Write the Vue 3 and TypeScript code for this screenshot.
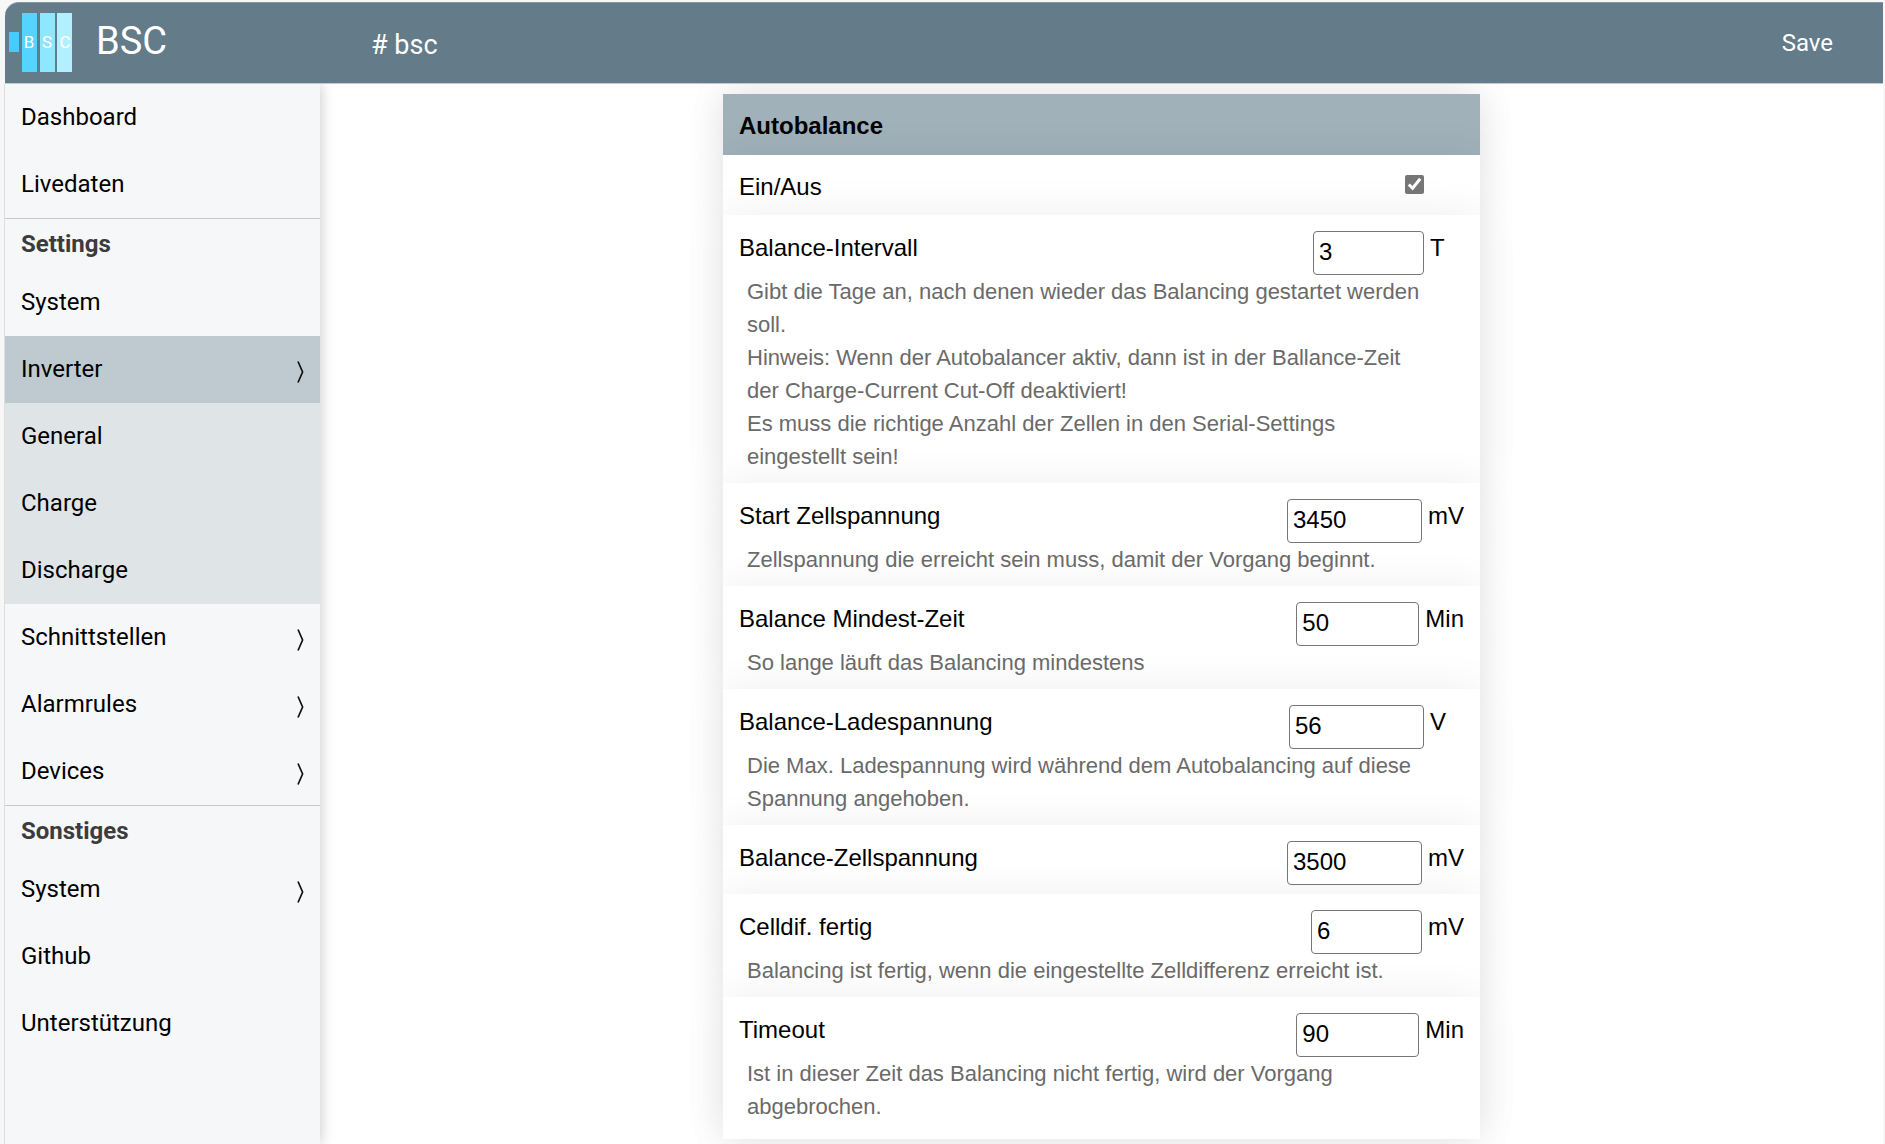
<script setup lang="ts">
import { reactive, ref } from 'vue'

interface NavItem {
  label: string
  expandable?: boolean
  active?: boolean
  children?: string[]
}

interface NavGroup {
  title?: string
  items: NavItem[]
}

interface Field {
  id: string
  label: string
  value: number
  unit: string
  size: 'small' | 'medium' | 'large'
  help?: string
}

const groups: NavGroup[] = [
  { items: [{ label: 'Dashboard' }, { label: 'Livedaten' }] },
  {
    title: 'Settings',
    items: [
      { label: 'System' },
      {
        label: 'Inverter',
        expandable: true,
        active: true,
        children: ['General', 'Charge', 'Discharge'],
      },
      { label: 'Schnittstellen', expandable: true },
      { label: 'Alarmrules', expandable: true },
      { label: 'Devices', expandable: true },
    ],
  },
  {
    title: 'Sonstiges',
    items: [
      { label: 'System', expandable: true },
      { label: 'Github' },
      { label: 'Unterstützung' },
    ],
  },
]

const enabled = ref(true)

const fields = reactive<Field[]>([
  {
    id: 'interval',
    label: 'Balance-Intervall',
    value: 3,
    unit: 'T',
    size: 'small',
    help:
      'Gibt die Tage an, nach denen wieder das Balancing gestartet werden soll.\n' +
      'Hinweis: Wenn der Autobalancer aktiv, dann ist in der Ballance-Zeit der Charge-Current Cut-Off deaktiviert!\n' +
      'Es muss die richtige Anzahl der Zellen in den Serial-Settings eingestellt sein!',
  },
  {
    id: 'start-voltage',
    label: 'Start Zellspannung',
    value: 3450,
    unit: 'mV',
    size: 'large',
    help: 'Zellspannung die erreicht sein muss, damit der Vorgang beginnt.',
  },
  {
    id: 'min-time',
    label: 'Balance Mindest-Zeit',
    value: 50,
    unit: 'Min',
    size: 'medium',
    help: 'So lange läuft das Balancing mindestens',
  },
  {
    id: 'charge-voltage',
    label: 'Balance-Ladespannung',
    value: 56,
    unit: 'V',
    size: 'large',
    help: 'Die Max. Ladespannung wird während dem Autobalancing auf diese Spannung angehoben.',
  },
  {
    id: 'cell-voltage',
    label: 'Balance-Zellspannung',
    value: 3500,
    unit: 'mV',
    size: 'large',
  },
  {
    id: 'cell-diff',
    label: 'Celldif. fertig',
    value: 6,
    unit: 'mV',
    size: 'small',
    help: 'Balancing ist fertig, wenn die eingestellte Zelldifferenz erreicht ist.',
  },
  {
    id: 'timeout',
    label: 'Timeout',
    value: 90,
    unit: 'Min',
    size: 'medium',
    help: 'Ist in dieser Zeit das Balancing nicht fertig, wird der Vorgang abgebrochen.',
  },
])
</script>

<template>
  <div class="window">
    <header class="topbar">
      <div class="brand">
        <svg class="logo" viewBox="0 0 64 60" aria-hidden="true">
          <rect x="0" y="19" width="10" height="20" fill="#48caff" />
          <rect x="13" y="0" width="15" height="59" fill="#55d4ff" />
          <rect x="31" y="0" width="15" height="59" fill="#8fe6ff" />
          <rect x="48" y="0" width="15" height="59" fill="#b3f0ff" />
          <g class="logo-text" fill="#fff" text-anchor="middle">
            <text x="20" y="35">B</text>
            <text x="38" y="35">S</text>
            <text x="56" y="35">C</text>
          </g>
        </svg>
        <span class="brand-name">BSC</span>
      </div>
      <h1 class="host"># bsc</h1>
      <button class="save" type="submit" form="settings">Save</button>
    </header>

    <div class="body">
      <nav class="sidebar">
        <section v-for="(group, gi) in groups" :key="gi" class="group">
          <h2 v-if="group.title" class="group-title">{{ group.title }}</h2>
          <template v-for="item in group.items" :key="item.label">
            <a href="#" class="nav-item" :class="{ active: item.active }">
              <span>{{ item.label }}</span>
              <svg v-if="item.expandable" class="chevron" viewBox="0 0 7 22" aria-hidden="true">
                <path d="M1 0.5 L5.6 11 L1 21.5" fill="none" stroke="#111" stroke-width="1.7" />
              </svg>
            </a>
            <a v-for="child in item.children" :key="child" href="#" class="nav-item child">{{ child }}</a>
          </template>
        </section>
      </nav>

      <main class="content">
        <form id="settings" class="card" @submit.prevent>
          <h2 class="card-title">Autobalance</h2>
          <div class="row toggle-row">
            <div class="line">
              <label for="enabled">Ein/Aus</label>
              <input id="enabled" v-model="enabled" type="checkbox" />
              <span class="unit"></span>
            </div>
          </div>
          <div v-for="field in fields" :key="field.id" class="row" :class="{ plain: !field.help }">
            <div class="line">
              <label :for="field.id">{{ field.label }}</label>
              <input :id="field.id" v-model="field.value" type="number" class="number" :class="field.size" />
              <span class="unit">{{ field.unit }}</span>
            </div>
            <p v-if="field.help" class="help">{{ field.help }}</p>
          </div>
        </form>
      </main>
    </div>
  </div>
</template>

<style>
body {
  margin: 0;
  background: #f7f7f7;
}
</style>

<style scoped>
.window {
  box-sizing: border-box;
  display: flex;
  flex-direction: column;
  min-height: 100vh;
  padding: 2px 2px 0 4px;
  font-family: Roboto, "Liberation Sans", sans-serif;
  font-size: 24px;
  color: #000;
}

.topbar {
  box-sizing: border-box;
  display: flex;
  align-items: center;
  height: 82px;
  margin-left: 1px;
  padding: 0 50px 0 4px;
  border-top: 1px solid #8497a1;
  border-bottom: 1px solid #c0cad0;
  border-top-left-radius: 14px;
  background: #647b89;
  color: #fff;
}

.brand {
  display: flex;
  align-items: center;
  gap: 23px;
  width: 362px;
}

.logo {
  width: 64px;
  height: 60px;
}

.logo-text {
  font-size: 17px;
}

.brand-name {
  padding-bottom: 4px;
  font-size: 38px;
  line-height: 44px;
}

.host {
  flex: 1;
  margin: 0;
  padding-top: 4px;
  font-size: 27px;
  font-weight: 400;
  line-height: 32px;
}

.save {
  padding: 0;
  border: 0;
  background: none;
  color: inherit;
  font: inherit;
  cursor: pointer;
}

.body {
  display: flex;
  flex: 1;
  border-left: 1px solid #dedede;
  background: #fff;
}

.sidebar {
  z-index: 1;
  flex: none;
  width: 315px;
  background: #f6f7f9;
  box-shadow: 2px 0 12px rgba(0, 0, 0, 0.18);
  clip-path: inset(0 -20px 0 0);
}

.group + .group {
  border-top: 1px solid #c5c9cc;
}

.group-title {
  margin: 0;
  padding: 0 16px;
  color: #3c3c3c;
  font-size: 24px;
  font-weight: 700;
  line-height: 50px;
}

.nav-item {
  box-sizing: border-box;
  display: flex;
  align-items: center;
  justify-content: space-between;
  height: 67px;
  padding: 0 16px 2px;
  color: #000;
  text-decoration: none;
}

.nav-item.active {
  background: #bfcad0;
}

.nav-item.child {
  background: #dfe5e7;
}

.chevron {
  width: 7px;
  height: 22px;
  margin-top: 6px;
}

.content {
  flex: 1;
  display: flex;
  align-items: flex-start;
  justify-content: center;
  padding: 10px 16px 5px;
  overflow: hidden;
  font-family: "Liberation Sans", Arial, sans-serif;
}

.card {
  width: 100%;
  max-width: 757px;
  background: #fff;
  box-shadow: 0 0 40px rgba(0, 0, 0, 0.07);
}

.card-title {
  margin: 0;
  padding: 2px 16px 0;
  background: #a1b1b9;
  box-shadow: 0 0 40px rgba(0, 0, 0, 0.07);
  font-size: 24px;
  line-height: 59px;
}

.row {
  padding: 16px 16px 10px;
  background: #fff;
  box-shadow: 0 0 40px rgba(0, 0, 0, 0.07);
}

.row.plain {
  padding-bottom: 9px;
}

.row:last-child {
  padding-bottom: 16px;
}

.toggle-row {
  padding-bottom: 0;
}

.line {
  display: flex;
  align-items: flex-start;
  gap: 6px;
  height: 44px;
}

.line label {
  flex: 1;
  line-height: 34px;
}

.toggle-row label {
  line-height: 32px;
}

.unit {
  min-width: 34px;
  line-height: 34px;
}

input {
  margin: 0;
}

input[type='checkbox'] {
  width: 19px;
  height: 19px;
  margin-top: 4px;
  accent-color: #767676;
}

.number {
  box-sizing: border-box;
  height: 44px;
  padding: 0 5px 2px;
  border: 1px solid #767676;
  border-radius: 4px;
  background: #fff;
  color: #000;
  font: inherit;
  appearance: textfield;
}

.small {
  width: 111px;
}

.medium {
  width: 123px;
}

.large {
  width: 135px;
}

.help {
  margin: 0 34px 0 8px;
  color: #6a6a6a;
  font-size: 22px;
  line-height: 33px;
  white-space: pre-line;
}
</style>
